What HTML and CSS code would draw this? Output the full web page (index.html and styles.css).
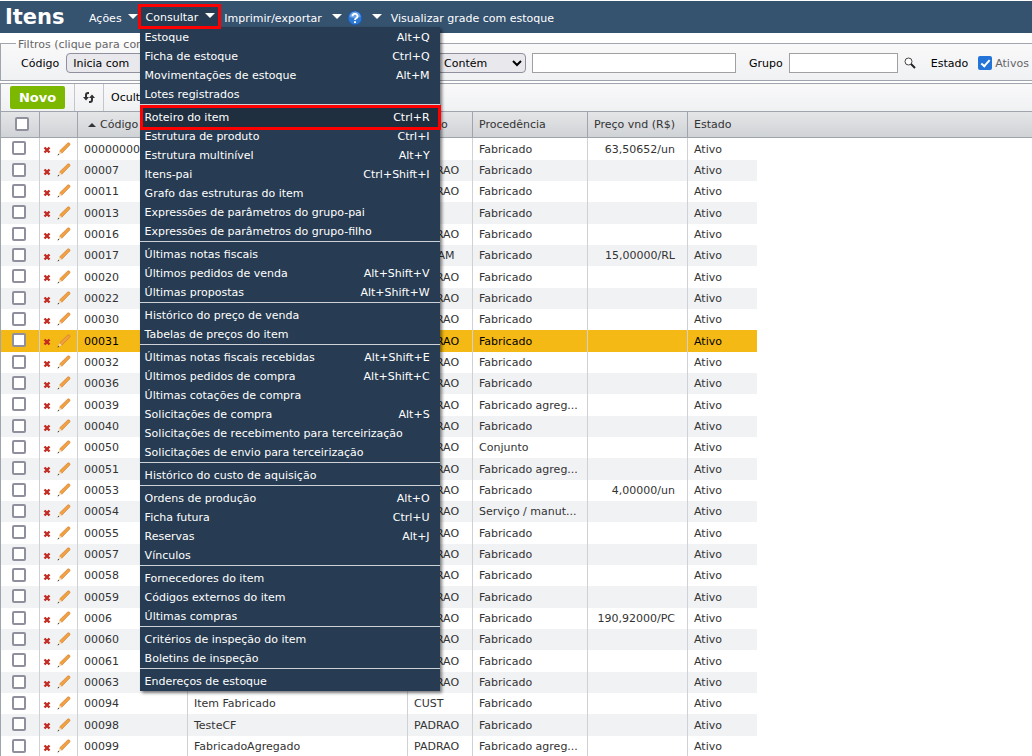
FILE: index.html
```
<!DOCTYPE html>
<html lang="pt-br">
<head>
    <meta charset="UTF-8">
    <meta name="viewport" content="width=device-width, initial-scale=1.0">
    <title>Itens</title>
    <link rel="stylesheet" href="styles.css">
</head>
<body>
<header class="topbar">
    <h1 class="title">Itens</h1>
    <nav class="menubar">
        <button type="button" class="menu-button">Ações <span class="arrow"></span></button>
        <div class="menu-holder">
            <button type="button" class="menu-button open">Consultar <span class="arrow"></span></button>
            <ul class="menu">
                <li><a href="#">Estoque <span>Alt+Q</span></a></li>
                <li><a href="#">Ficha de estoque <span>Ctrl+Q</span></a></li>
                <li><a href="#">Movimentações de estoque <span>Alt+M</span></a></li>
                <li><a href="#">Lotes registrados</a></li>
                <li class="separated"><a href="#" class="current">Roteiro do item <span>Ctrl+R</span></a></li>
                <li><a href="#">Estrutura de produto <span>Ctrl+I</span></a></li>
                <li><a href="#">Estrutura multinível <span>Alt+Y</span></a></li>
                <li><a href="#">Itens-pai <span>Ctrl+Shift+I</span></a></li>
                <li><a href="#">Grafo das estruturas do item</a></li>
                <li><a href="#">Expressões de parâmetros do grupo-pai</a></li>
                <li><a href="#">Expressões de parâmetros do grupo-filho</a></li>
                <li class="separated"><a href="#">Últimas notas fiscais</a></li>
                <li><a href="#">Últimos pedidos de venda <span>Alt+Shift+V</span></a></li>
                <li><a href="#">Últimas propostas <span>Alt+Shift+W</span></a></li>
                <li class="separated"><a href="#">Histórico do preço de venda</a></li>
                <li><a href="#">Tabelas de preços do item</a></li>
                <li class="separated"><a href="#">Últimas notas fiscais recebidas <span>Alt+Shift+E</span></a></li>
                <li><a href="#">Últimos pedidos de compra <span>Alt+Shift+C</span></a></li>
                <li><a href="#">Últimas cotações de compra</a></li>
                <li><a href="#">Solicitações de compra <span>Alt+S</span></a></li>
                <li><a href="#">Solicitações de recebimento para terceirização</a></li>
                <li><a href="#">Solicitações de envio para terceirização</a></li>
                <li class="separated"><a href="#">Histórico do custo de aquisição</a></li>
                <li class="separated"><a href="#">Ordens de produção <span>Alt+O</span></a></li>
                <li><a href="#">Ficha futura <span>Ctrl+U</span></a></li>
                <li><a href="#">Reservas <span>Alt+J</span></a></li>
                <li><a href="#">Vínculos</a></li>
                <li class="separated"><a href="#">Fornecedores do item</a></li>
                <li><a href="#">Códigos externos do item</a></li>
                <li><a href="#">Últimas compras</a></li>
                <li class="separated"><a href="#">Critérios de inspeção do item</a></li>
                <li><a href="#">Boletins de inspeção</a></li>
                <li class="separated"><a href="#">Endereços de estoque</a></li>
            </ul>
        </div>
        <button type="button" class="menu-button export">Imprimir/exportar <span class="arrow"></span></button>
        <button type="button" class="menu-button help" aria-label="Ajuda">
            <svg width="16" height="16" viewBox="0 0 16 16">
                <circle cx="8" cy="8" r="7" fill="#2f78d0" stroke="#1c56a8"/>
                <path d="M2.500 7a5.500 5.500 0 0 1 11 0q-5.500 2-11 0z" fill="#6ba3e6"/>
                <path d="M5.500 6.200a2.500 2.300 0 1 1 3.700 2Q8 8.800 8 10" fill="none" stroke="#fff" stroke-width="1.800"/>
                <circle cx="8" cy="12.200" r="1.100" fill="#fff"/>
            </svg>
            <span class="arrow"></span>
        </button>
        <button type="button" class="menu-button">Visualizar grade com estoque</button>
    </nav>
</header>

<fieldset class="filters">
    <legend>Filtros (clique para configurar)</legend>
    <div class="filter-row">
        <div class="field code-field">
            <label for="codigo">Código</label>
            <select id="codigo"><option>Inicia com</option></select>
        </div>
        <div class="field name-field">
            <select id="descricao-op" aria-label="Descrição"><option>Contém</option></select>
            <input type="text" class="name-input" aria-label="Texto da descrição">
        </div>
        <div class="field group-field">
            <label for="grupo">Grupo</label>
            <input type="text" id="grupo">
            <button type="button" class="search" aria-label="Pesquisar grupo">
                <svg width="12" height="12" viewBox="0 0 12 12">
                    <circle cx="4.500" cy="4.500" r="3.500" fill="#fff" stroke="#444"/>
                    <path d="M7 7l4 4" stroke="#222" stroke-width="2"/>
                </svg>
            </button>
        </div>
        <div class="field state-field">
            <span>Estado</span>
            <input type="checkbox" id="ativos" class="check" checked>
            <label for="ativos">Ativos</label>
        </div>
    </div>
</fieldset>

<div class="toolbar">
    <div class="tool"><button type="button" class="new-button">Novo</button></div>
    <div class="tool">
        <button type="button" class="refresh" aria-label="Atualizar">
            <svg width="14" height="12" viewBox="0 0 14 12" fill="none" stroke="#333" stroke-width="2">
                <path d="M7 1H6Q4 1 4 3v3"/>
                <path d="M1 5h6L4 8.500z" fill="#333" stroke="none"/>
                <path d="M7 10h1q2 0 2-2V5"/>
                <path d="M7 6h6L10 2.500z" fill="#333" stroke="none"/>
            </svg>
        </button>
    </div>
    <div class="tool"><button type="button" class="hide-button">Ocultar</button></div>
</div>

<table class="grid">
    <colgroup>
        <col class="col-check"><col class="col-actions"><col class="col-code"><col class="col-name">
        <col class="col-group"><col class="col-origin"><col class="col-price"><col class="col-state"><col>
    </colgroup>
    <thead>
        <tr>
            <th><input type="checkbox" class="check" aria-label="Selecionar todos"></th>
            <th></th>
            <th><span class="sort"></span>Código</th>
            <th>Descrição</th>
            <th>Grupo</th>
            <th>Procedência</th>
            <th>Preço vnd (R$)</th>
            <th>Estado</th>
            <th></th>
        </tr>
    </thead>
    <tbody id="items"></tbody>
</table>

<script src="script.js"></script>
</body>
</html>
```
FILE: styles.css
```
body {
    margin: 0;
    padding-top: 1px;
    background: #fff;
    color: #333;
    font-family: Verdana, "DejaVu Sans", sans-serif;
    font-size: 11px;
    overflow: hidden;
}

button,
input,
select {
    font: inherit;
    box-sizing: border-box;
    margin: 0;
}

button {
    border: none;
    background: none;
    padding: 0;
    color: inherit;
    cursor: pointer;
}

/* barra superior */
.topbar {
    display: flex;
    height: 32px;
    background: #35526f;
    color: #fff;
}

.title {
    width: 84px;
    box-sizing: border-box;
    padding-left: 5px;
    margin: 0;
    font-size: 21px;
    line-height: 32px;
}

.menubar {
    display: flex;
}

.menu-button {
    display: flex;
    align-items: center;
    gap: 6px;
    height: 32px;
    padding: 2px 0 0 5px;
    white-space: nowrap;
}

.arrow {
    border: 5px solid transparent;
    border-top: 5px solid #fff;
    border-bottom: none;
    margin-bottom: 4px;
}

.export {
    gap: 10px;
    padding-left: 3px;
}

.help {
    gap: 9px;
    padding-right: 4px;
}

.menu-holder {
    position: relative;
}

.menu-button.open {
    position: relative;
    z-index: 3;
    gap: 7px;
    height: 25px;
    margin-top: 3px;
    padding: 2px 3px 0 5px;
    border: 3px solid #f00;
    background: #273c52;
}

.menu {
    position: absolute;
    z-index: 2;
    top: 26px;
    left: 2px;
    width: 300px;
    margin: 0;
    padding: 1px 0 0;
    list-style: none;
    background: #273c52;
    box-shadow: 2px 2px 3px rgba(0, 0, 0, 0.5);
}

.menu a {
    display: flex;
    justify-content: space-between;
    padding: 0 10px 0 5px;
    line-height: 19px;
    color: #fff;
    text-decoration: none;
    white-space: nowrap;
}

.menu .separated {
    border-top: 1px solid #ccd2d8;
    padding-top: 3px;
}

.menu .current {
    position: relative;
    margin: 0 2px 0 3px;
    padding: 0 8px 0 2px;
    background: #202f40;
    outline: 3px solid #f00;
}

/* filtros */
.filters {
    margin: 3px 0 0;
    padding: 1px 0 6px;
    border: 1px solid #a0a4ac;
    border-right: none;
    background: linear-gradient(#f9f9fa, #f0f1f3);
}

.filters legend {
    margin-left: 15px;
    padding: 3px 2px 0;
    color: #666;
    line-height: 12px;
}

.filter-row {
    display: flex;
    align-items: center;
    height: 22px;
    color: #000;
}

.field {
    display: flex;
    align-items: center;
    flex: none;
}

.field select {
    height: 20px;
    padding: 0 2px;
    border: 1px solid #8f8f9d;
    border-radius: 4px;
    background: #e9e9ed;
    color: #000;
}

.field input[type="text"] {
    height: 20px;
    border: 1px solid #a0a0a0;
    background: #fff;
}

.code-field {
    width: 436px;
    padding-left: 20px;
    box-sizing: border-box;
    gap: 7px;
}

.code-field select {
    width: 100px;
}

.name-field {
    gap: 6px;
}

.name-field select {
    width: 89px;
}

.name-input {
    width: 204px;
}

.group-field {
    margin-left: 13px;
    gap: 6px;
}

#grupo {
    width: 109px;
}

.search {
    height: 12px;
}

.state-field {
    margin-left: 15px;
    white-space: nowrap;
}

.state-field .check {
    margin: 0 3px 0 10px;
}

.state-field label {
    color: #666;
}

.check {
    appearance: none;
    width: 14px;
    height: 14px;
    border: 2px solid #8f8f9d;
    border-radius: 2px;
    background: #fff;
    vertical-align: middle;
}

.check:checked {
    border: none;
    background: #2374d8;
}

.check:checked::before {
    content: "";
    display: block;
    width: 3px;
    height: 7px;
    margin: 2px 0 0 5px;
    border: solid #fff;
    border-width: 0 2px 2px 0;
    transform: rotate(42deg);
}

/* barra de ferramentas */
.toolbar {
    display: flex;
    height: 27px;
    margin-top: 2px;
    border: 1px solid #a0a4ac;
    border-width: 1px 0 0 1px;
    background: linear-gradient(#f9f9fa, #f0f1f3);
    color: #000;
}

.tool {
    display: flex;
    align-items: center;
    padding: 0 7px;
    border-right: 1px solid #c4c6cb;
}

.tool:first-child {
    padding: 0 9px;
}

.tool:last-child {
    border-right: none;
}

.new-button {
    width: 55px;
    height: 23px;
    border-radius: 2px;
    background: #7db800;
    color: #fff;
    font-size: 13px;
    font-weight: bold;
}

.refresh {
    height: 12px;
}

/* tabela */
.grid {
    width: 100%;
    border-collapse: separate;
    border-spacing: 0;
    table-layout: fixed;
    border-left: 1px solid #a0a4ac;
}

.col-check { width: 39px; }
.col-actions { width: 38px; }
.col-code { width: 110px; }
.col-name { width: 220px; }
.col-group { width: 65px; }
.col-origin { width: 115px; }
.col-price { width: 100px; }
.col-state { width: 69px; }

.grid th,
.grid td {
    box-sizing: border-box;
    padding: 0 6px;
    text-align: left;
    white-space: nowrap;
    overflow: hidden;
    text-overflow: ellipsis;
}

.grid th {
    height: 27px;
    border: 1px solid #a0a4ac;
    border-left: none;
    background: linear-gradient(#e4e5e7, #d0d3d6);
    font-weight: normal;
}

.grid th:first-child {
    padding: 0 0 2px 14px;
}

.grid th:nth-child(n+8) {
    border-right: none;
}

.sort {
    display: inline-block;
    margin: 0 4px 1px;
    border: 4px solid transparent;
    border-bottom: 4px solid #333;
    border-top: none;
}

.grid td {
    height: 21px;
    border-right: 1px solid #d0d1d4;
}

.grid tbody tr:nth-child(3n+1) td {
    height: 22px;
}

.grid td:nth-child(n+8) {
    border-right: none;
}

.grid tbody tr:nth-child(even) td:not(:last-child) {
    background: #f1f2f4;
}

.grid tbody tr.selected td:not(:last-child) {
    background: #f5b916;
    color: #000;
}

.grid td:first-child {
    padding: 0 0 2px 11px;
    line-height: 14px;
}

.grid td:nth-child(2) {
    padding: 0 0 1px 3px;
}

.grid td:nth-child(6) {
    padding-right: 4px;
}

.grid td:nth-child(7) {
    padding-right: 12px;
    text-align: right;
}

.actions {
    display: flex;
    align-items: center;
    gap: 6px;
}

.actions button {
    display: flex;
}

.delete {
    padding-top: 3px;
}
```
FILE: script.js
```
// codigo, descricao, grupo, procedencia, preco
var items = [
    ["0000000001", "", "", "Fabricado", "63,50652/un"],
    ["00007", "", "PADRAO", "Fabricado", ""],
    ["00011", "", "PADRAO", "Fabricado", ""],
    ["00013", "", "", "Fabricado", ""],
    ["00016", "", "PADRAO", "Fabricado", ""],
    ["00017", "", "GRAAM", "Fabricado", "15,00000/RL"],
    ["00020", "", "PADRAO", "Fabricado", ""],
    ["00022", "", "PADRAO", "Fabricado", ""],
    ["00030", "", "PADRAO", "Fabricado", ""],
    ["00031", "", "PADRAO", "Fabricado", ""],
    ["00032", "", "PADRAO", "Fabricado", ""],
    ["00036", "", "PADRAO", "Fabricado", ""],
    ["00039", "", "PADRAO", "Fabricado agreg...", ""],
    ["00040", "", "PADRAO", "Fabricado", ""],
    ["00050", "", "PADRAO", "Conjunto", ""],
    ["00051", "", "PADRAO", "Fabricado agreg...", ""],
    ["00053", "", "PADRAO", "Fabricado", "4,00000/un"],
    ["00054", "", "PADRAO", "Serviço / manut...", ""],
    ["00055", "", "PADRAO", "Fabricado", ""],
    ["00057", "", "PADRAO", "Fabricado", ""],
    ["00058", "", "PADRAO", "Fabricado", ""],
    ["00059", "", "PADRAO", "Fabricado", ""],
    ["0006", "", "PADRAO", "Fabricado", "190,92000/PC"],
    ["00060", "", "PADRAO", "Fabricado", ""],
    ["00061", "", "PADRAO", "Fabricado", ""],
    ["00063", "", "PADRAO", "Fabricado", ""],
    ["00094", "Item Fabricado", "CUST", "Fabricado", ""],
    ["00098", "TesteCF", "PADRAO", "Fabricado", ""],
    ["00099", "FabricadoAgregado", "PADRAO", "Fabricado agreg...", ""]
];

var deleteIcon = '<svg width="8" height="8" viewBox="0 0 8 8"><path d="M1.500 1.500l5 5M6.500 1.500l-5 5" stroke="#c22a22" stroke-width="2.400"/></svg>';
var editIcon = '<svg width="14" height="14" viewBox="0 0 14 14">' +
    '<path d="M2.500 9L11 .8q2-.3 2 2L4.800 11.300z" fill="#f2a040" stroke="#c8782a" stroke-width=".6"/>' +
    '<path d="M2.500 9l2.300 2.300L1 13z" fill="#f5dcb0"/><path d="M.5 13.500l.7-1.800 1.100 1.100z" fill="#333"/></svg>';

function renderItems() {
    var html = "";
    items.forEach(function (item) {
        html += '<tr' + (item[0] === "00031" ? ' class="selected"' : '') + '>' +
            '<td><input type="checkbox" class="check" aria-label="Selecionar ' + item[0] + '"></td>' +
            '<td><div class="actions"><button type="button" class="delete" aria-label="Excluir">' + deleteIcon + '</button>' +
            '<button type="button" aria-label="Editar">' + editIcon + '</button></div></td>';
        item.forEach(function (value) {
            html += '<td>' + value + '</td>';
        });
        html += '<td>Ativo</td><td></td></tr>';
    });
    document.getElementById("items").innerHTML = html;
}

renderItems();
```
